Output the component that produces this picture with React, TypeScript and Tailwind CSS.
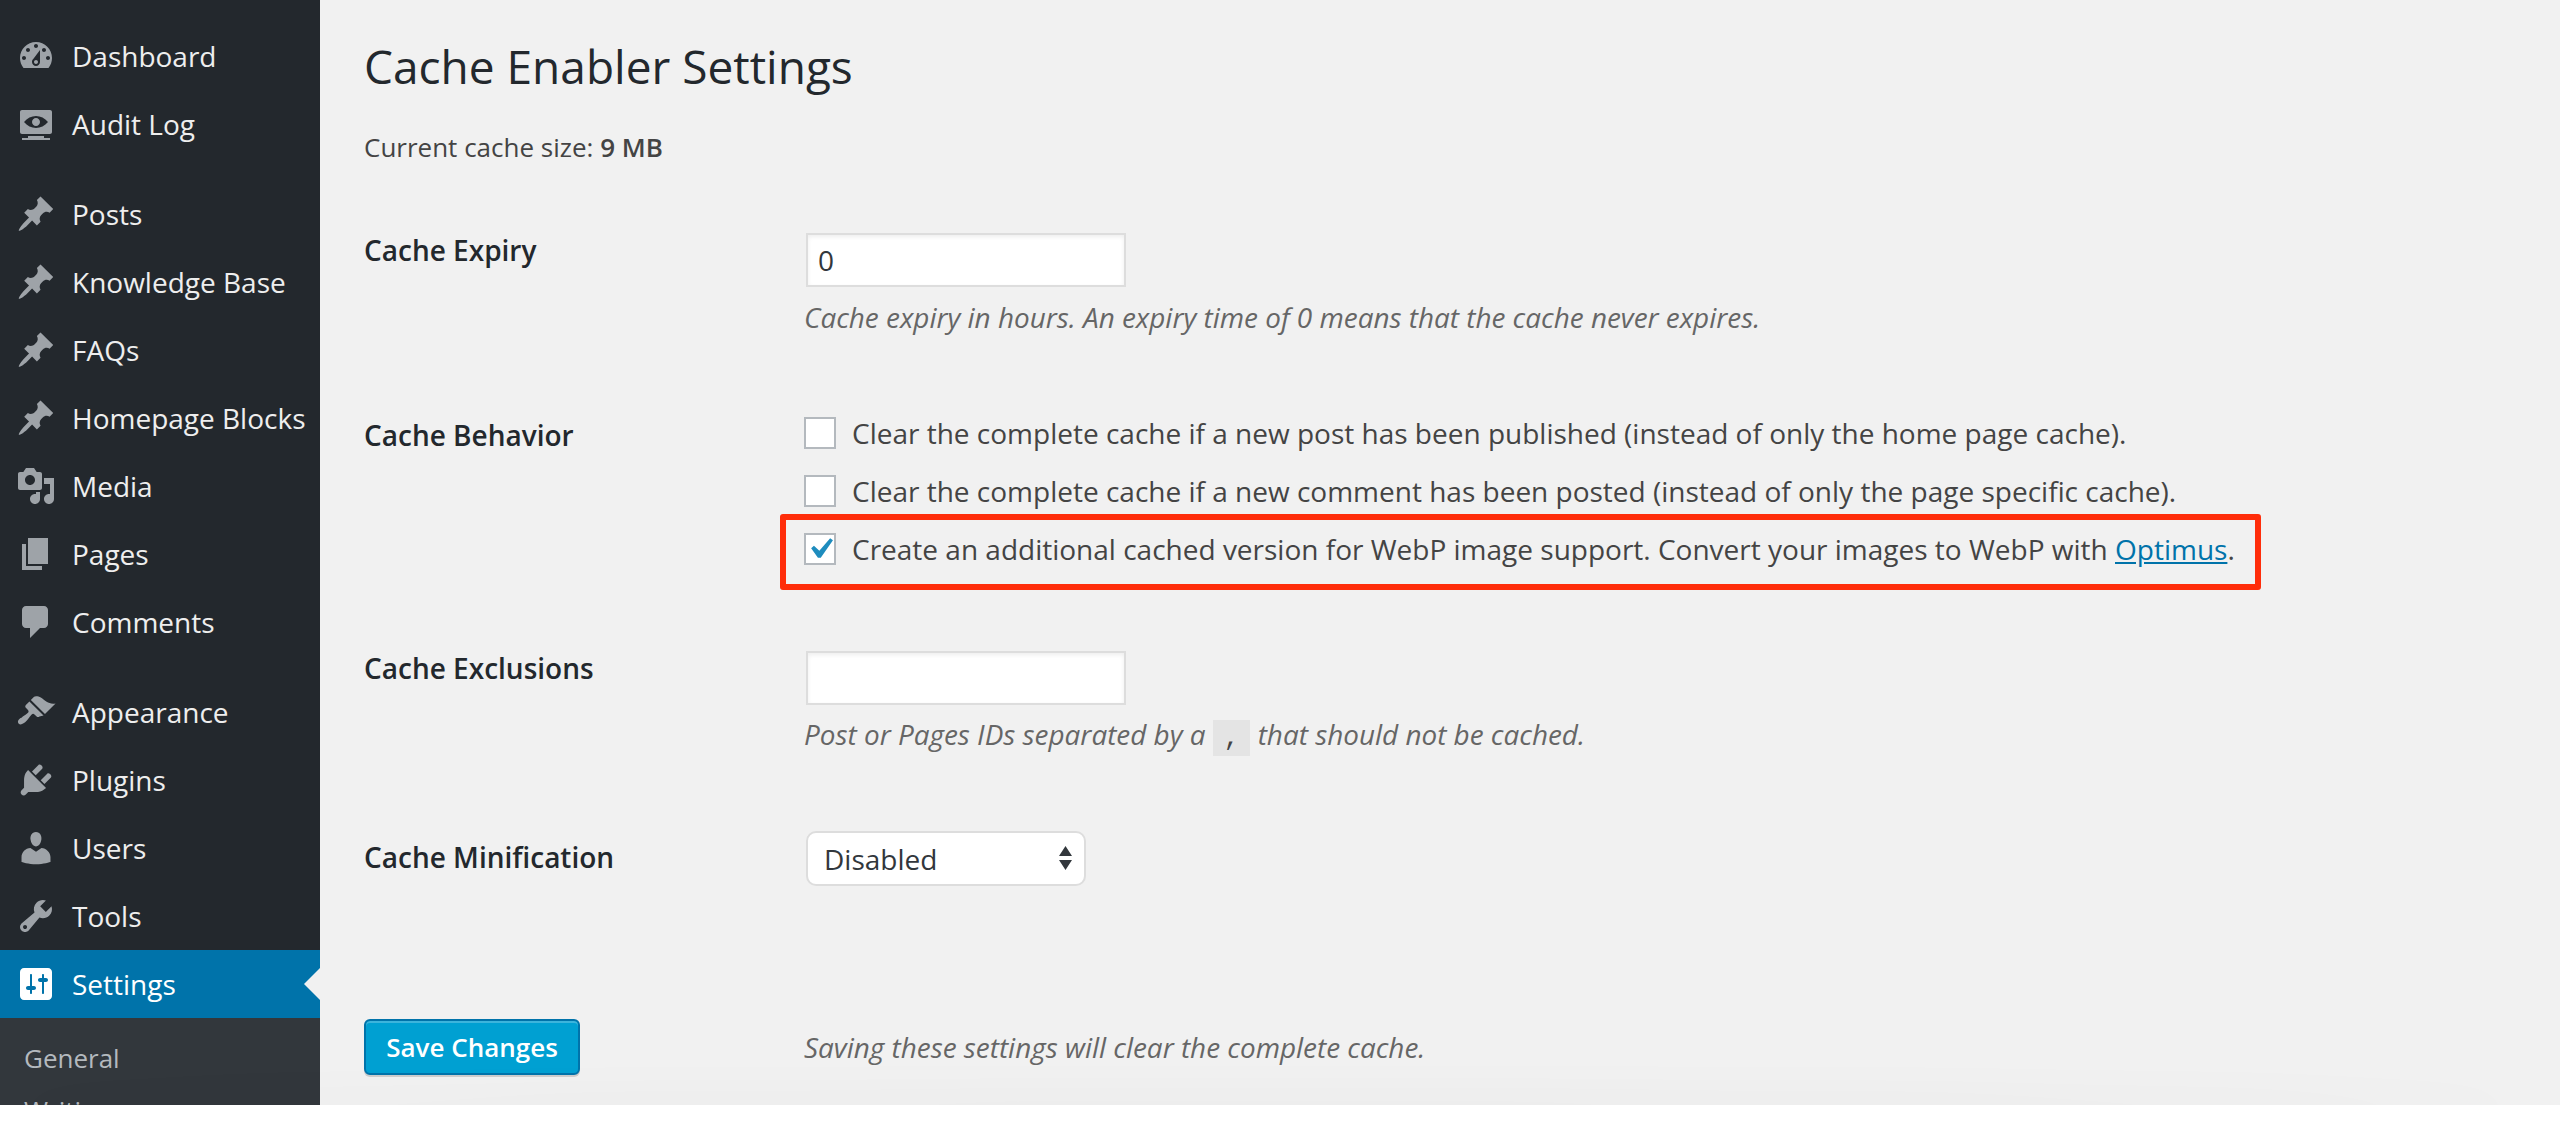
import type { ReactNode } from 'react';

const icons: Record<string, string> = {
  dashboard:
    'M3.76 16h12.48c1.1-1.37 1.76-3.11 1.76-5 0-4.42-3.58-8-8-8s-8 3.58-8 8c0 1.89.66 3.63 1.76 5zM10 4c.55 0 1 .45 1 1s-.45 1-1 1-1-.45-1-1 .45-1 1-1zM6 6c.55 0 1 .45 1 1s-.45 1-1 1-1-.45-1-1 .45-1 1-1zm8 0c.55 0 1 .45 1 1s-.45 1-1 1-1-.45-1-1 .45-1 1-1zm-5.37 5.55L12 7v6c0 1.1-.9 2-2 2s-2-.9-2-2c0-.57.24-1.08.63-1.45zM4 10c.55 0 1 .45 1 1s-.45 1-1 1-1-.45-1-1 .45-1 1-1zm12 0c.55 0 1 .45 1 1s-.45 1-1 1-1-.45-1-1 .45-1 1-1zm-5 3c0-.55-.45-1-1-1s-1 .45-1 1 .45 1 1 1 1-.45 1-1z',
  audit:
    'M18 14V4c0-.55-.45-1-1-1H3c-.55 0-1 .45-1 1v10c0 .55.45 1 1 1h14c.55 0 1-.45 1-1zm-8-8c2.3 0 4.4 1.14 6 3-1.6 1.86-3.7 3-6 3s-4.4-1.14-6-3c1.6-1.86 3.7-3 6-3zm2 3c0-1.1-.9-2-2-2s-2 .9-2 2 .9 2 2 2 2-.9 2-2zm2 8h3v1H3v-1h3v-1h8v1z',
  post:
    'M10.44 3.02l1.82-1.82 6.36 6.35-1.83 1.82c-1.05-.68-2.48-.57-3.41.36l-.75.75c-.92.93-1.04 2.35-.35 3.41l-1.83 1.82-2.41-2.41-2.8 2.79c-.42.42-3.38 2.71-3.8 2.29s1.86-3.39 2.28-3.81l2.79-2.79L4.1 9.36l1.83-1.82c1.05.69 2.48.57 3.41-.36l.75-.75c.93-.92 1.04-2.35.35-3.41z',
  media:
    'M13 11V4c0-.55-.45-1-1-1h-1.67L9 1H5L3.67 3H2c-.55 0-1 .45-1 1v7c0 .55.45 1 1 1h10c.55 0 1-.45 1-1zM7 4.5c1.38 0 2.5 1.12 2.5 2.5S8.38 9.5 7 9.5 4.5 8.38 4.5 7 5.62 4.5 7 4.5zM14 6h5v10.5c0 1.38-1.12 2.5-2.5 2.5S14 17.88 14 16.5s1.12-2.5 2.5-2.5c.17 0 .34.02.5.05V9h-3V6zm-4 8.05V13h2v3.5c0 1.38-1.12 2.5-2.5 2.5S7 17.88 7 16.5 8.12 14 9.5 14c.17 0 .34.02.5.05z',
  page: 'M6 15V2h10v13H6zm-1 1h8v2H3V5h2v11z',
  comments: 'M5 2h9c1.1 0 2 .9 2 2v7c0 1.1-.9 2-2 2h-2l-5 5v-5H5c-1.1 0-2-.9-2-2V4c0-1.1.9-2 2-2z',
  appearance:
    'M14.48 11.06L7.41 3.99l1.5-1.5c.5-.56 2.3-.47 3.51.32 1.21.8 1.43 1.28 2.91 2.1 1.18.64 2.45 1.26 4.45.85zm-.71.71L6.7 4.7 4.93 6.47c-.39.39-.39 1.02 0 1.41l1.06 1.06c.39.39.39 1.03 0 1.42-.6.6-1.43 1.11-2.21 1.69-.35.26-.7.53-1.01.84C1.43 13.23.4 14.85 1.37 15.82c.97.98 2.59-.06 3.94-1.4.31-.31.58-.66.84-1.02.57-.78 1.08-1.61 1.69-2.21.39-.39 1.02-.39 1.41 0l1.06 1.06c.39.39 1.02.39 1.41 0z',
  plugins:
    'M13.11 4.36L9.87 7.6 8 5.73l3.24-3.24c.35-.34 1.05-.2 1.56.32.52.51.66 1.21.31 1.55zm-8 1.77l.91-1.12 9.01 9.01-1.19.84c-.71.71-2.63 1.16-3.82 1.16H6.14L4.9 17.26c-.59.59-1.54.59-2.12 0-.59-.58-.59-1.53 0-2.12l1.24-1.24v-3.88c0-1.13.4-3.19 1.09-3.89zm7.26 3.97l3.24-3.24c.34-.35 1.04-.21 1.55.31.52.51.66 1.21.31 1.55l-3.24 3.25z',
  users:
    'M10 9.25c-2.27 0-2.73-3.44-2.73-3.44C7 4.02 7.82 2 9.97 2c2.16 0 2.98 2.02 2.71 3.81 0 0-.41 3.44-2.68 3.44zm0 2.57L12.72 10c2.39 0 4.52 2.33 4.52 4.53v2.49s-3.65 1.13-7.24 1.13c-3.65 0-7.24-1.13-7.24-1.13v-2.49c0-2.25 1.94-4.48 4.47-4.48z',
  tools:
    'M16.68 9.77c-1.34 1.34-3.3 1.67-4.95.99l-5.41 6.52c-.99.99-2.59.99-3.58 0s-.99-2.59 0-3.57l6.52-5.42c-.68-1.65-.35-3.61.99-4.95 1.28-1.28 3.12-1.62 4.72-1.06l-2.89 2.89 2.82 2.82 2.86-2.87c.53 1.58.18 3.39-1.08 4.65zM3.81 16.21c.4.39 1.04.39 1.43 0 .4-.4.4-1.04 0-1.43-.39-.4-1.03-.4-1.43 0-.39.39-.39 1.03 0 1.43z',
  settings:
    'M18 16V4c0-1.1-.9-2-2-2H4c-1.1 0-2 .9-2 2v12c0 1.1.9 2 2 2h12c1.1 0 2-.9 2-2zM8 11h1c.55 0 1 .45 1 1s-.45 1-1 1H8v1.5c0 .28-.22.5-.5.5s-.5-.22-.5-.5V13H6c-.55 0-1-.45-1-1s.45-1 1-1h1V5.5c0-.28.22-.5.5-.5s.5.22.5.5V11zm5-2h-1c-.55 0-1-.45-1-1s.45-1 1-1h1V5.5c0-.28.22-.5.5-.5s.5.22.5.5V7h1c.55 0 1 .45 1 1s-.45 1-1 1h-1v5.5c0 .28-.22.5-.5.5s-.5-.22-.5-.5V9z',
};

function MenuItem({ icon, label, active }: { icon: string; label: string; active?: boolean }) {
  return (
    <div
      className={`relative flex h-[68px] items-center pl-4 ${active ? 'bg-[#0073aa] text-white' : 'text-[#eeeeee]'}`}
    >
      <svg viewBox="0 0 20 20" className={`h-10 w-10 shrink-0 ${active ? 'text-white' : 'text-[#9ea3a8]'}`}>
        <path d={icons[icon]} fill="currentColor" fillRule="evenodd" />
      </svg>
      <span className="ml-4 whitespace-nowrap">{label}</span>
      {active && (
        <span className="absolute right-0 top-1/2 h-0 w-0 -translate-y-1/2 border-y-[16px] border-r-[16px] border-y-transparent border-r-[#f1f1f1]" />
      )}
    </div>
  );
}

function Row({ label, className, children }: { label: string; className: string; children: ReactNode }) {
  return (
    <div className={`grid grid-cols-[442px_1fr] ${className}`}>
      <div className="font-semibold text-[#23282d]">{label}</div>
      <div>{children}</div>
    </div>
  );
}

function Check({ checked, children }: { checked?: boolean; children: ReactNode }) {
  return (
    <div className="flex h-[58px] items-center">
      <span className="relative h-8 w-8 shrink-0 border-2 border-[#b4b9be] bg-white">
        {checked && (
          <svg viewBox="0 0 20 20" className="absolute -left-[7px] -top-[7px] h-[42px] w-[42px] max-w-none">
            <path d="M14.83 4.89l1.34.94-5.81 8.38H9.02L5.78 9.67l1.34-1.25 2.57 2.4z" fill="#1e8cbe" />
          </svg>
        )}
      </span>
      <span className="ml-4 whitespace-nowrap">{children}</span>
    </div>
  );
}

export default function App() {
  return (
    <div className="min-h-[1146px] bg-white font-['Open_Sans','Noto_Sans',sans-serif] text-[28px] leading-[40px] text-[#444444]">
      <div className="relative flex h-[1105px] overflow-hidden bg-[#f1f1f1]">
        <aside className="w-[320px] shrink-0 bg-[#23282d] pt-[22px]">
          <MenuItem icon="dashboard" label="Dashboard" />
          <MenuItem icon="audit" label="Audit Log" />
          <div className="h-[22px]" />
          <MenuItem icon="post" label="Posts" />
          <MenuItem icon="post" label="Knowledge Base" />
          <MenuItem icon="post" label="FAQs" />
          <MenuItem icon="post" label="Homepage Blocks" />
          <MenuItem icon="media" label="Media" />
          <MenuItem icon="page" label="Pages" />
          <MenuItem icon="comments" label="Comments" />
          <div className="h-[22px]" />
          <MenuItem icon="appearance" label="Appearance" />
          <MenuItem icon="plugins" label="Plugins" />
          <MenuItem icon="users" label="Users" />
          <MenuItem icon="tools" label="Tools" />
          <MenuItem icon="settings" label="Settings" active />
          <div className="bg-[#32373c] pb-4 pl-6 pt-5 text-[26px] text-[#b4b9be]">
            <div className="h-[52px]">General</div>
            <div className="h-[52px]">Writing</div>
          </div>
        </aside>

        <main className="flex-1 pl-[44px]">
          <h1 className="mt-[40px] text-[46px] leading-[52px] text-[#23282d]">Cache Enabler Settings</h1>
          <p className="mt-[35px] text-[26px]">
            Current cache size: <b className="font-semibold">9 MB</b>
          </p>

          <Row label="Cache Expiry" className="mt-[63px]">
            <div className="mt-[3px] flex h-[54px] w-[320px] items-center border-2 border-[#dddddd] bg-white pl-[10px] text-[#32373c] shadow-[inset_0_2px_4px_rgba(0,0,0,0.07)]">
              0
            </div>
            <p className="-ml-[2px] mt-[10px] text-[27.9px] italic text-[#666666]">
              Cache expiry in hours. An expiry time of 0 means that the cache never expires.
            </p>
          </Row>

          <Row label="Cache Behavior" className="mt-[78px]">
            <div className="-mt-[11px] -ml-[2px]">
              <Check>Clear the complete cache if a new post has been published (instead of only the home page cache).</Check>
              <Check>Clear the complete cache if a new comment has been posted (instead of only the page specific cache).</Check>
              <div className="relative">
                <Check checked>
                  Create an additional cached version for WebP image support. Convert your images to WebP with{' '}
                  <a className="text-[#0073aa] underline">Optimus</a>.
                </Check>
                <div className="absolute -left-[24px] -top-[6px] h-[76px] w-[1481px] rounded-[3px] border-[6px] border-[#ff2d0a]" />
              </div>
            </div>
          </Row>

          <Row label="Cache Exclusions" className="mt-[70px]">
            <div className="mt-[3px] h-[54px] w-[320px] border-2 border-[#dddddd] bg-white shadow-[inset_0_2px_4px_rgba(0,0,0,0.07)]" />
            <p className="-ml-[2px] mt-[9px] text-[27.9px] italic text-[#666666]">
              Post or Pages IDs separated by a{' '}
              <code className="bg-[#e4e4e4] px-[11px] py-[3px] font-['Liberation_Mono',monospace] text-[26px] not-italic leading-none text-[#444444]">
                ,
              </code>{' '}
              that should not be cached.
            </p>
          </Row>

          <Row label="Cache Minification" className="mt-[83px]">
            <div className="relative -mt-[6px] flex h-[55px] w-[280px] items-center rounded-[10px] border-2 border-[#dddddd] bg-white pl-4 text-[#32373c]">
              Disabled
              <svg viewBox="0 0 13 24" className="absolute right-[12px] top-[13px] h-6 w-[13px]">
                <path d="M6.5 0L13 10H0zM0 14h13L6.5 24z" fill="#32373c" />
              </svg>
            </div>
          </Row>

          <div className="mt-[133px] grid grid-cols-[442px_1fr] items-center">
            <button className="h-[56px] w-[216px] rounded-[6px] border-2 border-[#0073aa] bg-[#00a0d2] text-[26px] font-semibold text-white shadow-[inset_0_2px_0_rgba(120,200,230,0.5),0_2px_0_rgba(0,0,0,0.15)]">
              Save Changes
            </button>
            <p className="-ml-[2px] text-[27.9px] italic text-[#666666]">Saving these settings will clear the complete cache.</p>
          </div>
        </main>

        <div className="pointer-events-none absolute -bottom-[10px] left-0 right-[30px] h-[10px] rounded-[50%] shadow-[0_0_50px_rgba(0,0,0,0.1)]" />
      </div>
    </div>
  );
}
